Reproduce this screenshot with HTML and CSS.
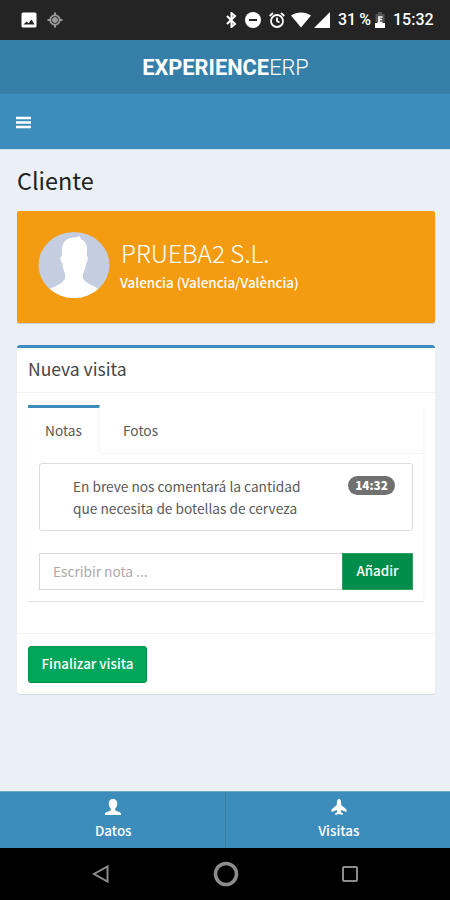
FILE: index.html
```html
<!DOCTYPE html>
<html lang="es">
<head>
    <meta charset="utf-8">
    <title>ExperienceERP</title>
    <link rel="stylesheet" href="styles.css">
</head>
<body>
    <div class="status-bar">
        <div class="status-left">
            <svg width="16" height="16" viewBox="0 0 16 16"><rect x="0.5" y="0.5" width="15" height="15" rx="1.5" fill="#fff"/><path d="M2.500 12.500l3-3 2 1.700 3-3.700 3 5z" fill="#242424"/></svg>
            <svg width="16" height="16" viewBox="0 0 16 16" fill="none" stroke="#999"><path d="M8 0.500v3M8 12.500v3M.5 8h3M12.500 8h3" stroke-width="2"/><circle cx="8" cy="8" r="4.700" stroke-width="2"/><circle cx="8" cy="8" r="2.500" fill="#999"/></svg>
        </div>
        <div class="status-right">
            <svg class="bluetooth" width="11" height="16" viewBox="0 0 11 16" fill="none" stroke="#fff" stroke-width="2"><path d="M1 4l8 8-3.500 3V1L9 4 1 12"/></svg>
            <svg class="dnd" width="16" height="16" viewBox="0 0 16 16"><circle cx="8" cy="8" r="8" fill="#fff"/><path d="M4 8h8" stroke="#242424" stroke-width="2"/></svg>
            <svg class="alarm" width="16" height="16" viewBox="0 0 16 16" fill="none" stroke="#fff" stroke-width="1.800"><circle cx="8" cy="9" r="6"/><path d="M8 5.500V9l2.500 1.500M.7 4L4 1M15.300 4L12 1"/></svg>
            <svg class="wifi" width="20" height="16" viewBox="0 0 20 16"><path d="M0 3.500C6-.5 14-.5 20 3.500L10 15.500z" fill="#fff"/></svg>
            <svg class="signal" width="16" height="16" viewBox="0 0 16 16"><path d="M16 0v16H0z" fill="#fff"/></svg>
            <span class="percent">31 %</span>
            <svg class="battery" width="10" height="16" viewBox="0 0 10 16"><path d="M3 0h4v2h2.500v8h-9V2H3z" fill="#555"/><path d="M0 11h10v5H0z" fill="#fff"/><path d="M7.500 5H4v5M4 7.500h3M2.500 10.500h5" stroke="#fff" stroke-width="1.600" fill="none"/></svg>
            <span class="clock">15:32</span>
        </div>
    </div>

    <header class="logo"><span><b>EXPERIENCE</b>ERP</span></header>
    <nav class="navbar">
        <svg width="15" height="13" viewBox="0 0 15 13" stroke="#fff" stroke-width="2.600"><path d="M0 2h15M0 6.500h15M0 11h15"/></svg>
    </nav>

    <main class="content">
        <h1>Cliente</h1>

        <div class="client">
            <svg class="avatar" width="72" height="66" viewBox="0 0 72 66">
                <clipPath id="round"><ellipse cx="36" cy="33" rx="35.500" ry="33"/></clipPath>
                <g clip-path="url(#round)">
                    <rect width="72" height="66" fill="#c5cde0"/>
                    <path d="M24 18C24 9 30 5.500 36 5.500c2.500 0 4-.6 5.500-2l1.500 3.500c4.500 2 6.500 6 6 12l-.3 5c1.600.3 1.500 5-.7 7.500C47.500 36 46.500 39 45 41.500v5C48 52 55 53 62 58v8H10v-8c7-4 14-5.500 17-11.500v-5c-1.500-2.500-2-6-2.500-10-2.500-2-2.500-7-.7-7.500z" fill="#fff"/>
                </g>
            </svg>
            <div class="client-info">
                <h2>PRUEBA2 S.L.</h2>
                <p>Valencia (Valencia/València)</p>
            </div>
        </div>

        <div class="box">
            <div class="box-header"><h3>Nueva visita</h3></div>
            <div class="box-body">
                <div class="tabs-custom">
                    <ul class="tabs">
                        <li class="active"><span>Notas</span></li>
                        <li><span>Fotos</span></li>
                    </ul>
                    <div class="tab-content">
                        <div class="note">
                            <p>En breve nos comentará la cantidad<br>que necesita de botellas de cerveza</p>
                            <span class="badge">14:32</span>
                        </div>
                        <div class="input-group">
                            <div class="input"><span>Escribir nota ...</span></div>
                            <button class="btn-add">Añadir</button>
                        </div>
                    </div>
                </div>
            </div>
            <div class="box-footer">
                <button class="btn-finish">Finalizar visita</button>
            </div>
        </div>
    </main>

    <nav class="bottom-nav">
        <div class="nav-item">
            <svg width="16" height="16" viewBox="0 0 16 16"><path d="M8 0c3 0 4.500 2 4.200 5-.2 2-1 3.500-2 4.500v1.700c1.500 1.300 4.800 1.300 5.800 3.300V16H0v-1.500c1-2 4.300-2 5.800-3.300V9.500c-1-1-1.800-2.500-2-4.500C3.500 2 5 0 8 0z" fill="#fff"/></svg>
            <span>Datos</span>
        </div>
        <div class="nav-item">
            <svg width="16" height="16" viewBox="0 0 16 16"><path d="M8 0c1.500 0 2.200 2 2.200 4v2l5.300 4.500V13l-5.300-2-.4 2 2 1.500V16L8.500 15 8 16l-.5-1-3.300 1v-1.500l2-1.500-.4-2L.5 13v-2.500L5.800 6V4c0-2 .7-4 2.200-4z" fill="#fff"/></svg>
            <span>Visitas</span>
        </div>
    </nav>

    <div class="android-nav">
        <svg width="18" height="18" viewBox="0 0 18 18" fill="none" stroke="#8c8c8c" stroke-width="2"><path d="M15.500 1.500v15L2 9z"/></svg>
        <svg width="26" height="26" viewBox="0 0 26 26" fill="none" stroke="#8c8c8c" stroke-width="3.600"><circle cx="13" cy="13" r="10.500"/></svg>
        <svg width="18" height="18" viewBox="0 0 18 18" fill="none" stroke="#8c8c8c" stroke-width="2"><rect x="2" y="2" width="14" height="14" rx="1"/></svg>
    </div>
</body>
</html>
```
FILE: styles.css
```css
* {
    box-sizing: border-box;
}

body {
    display: flex;
    flex-direction: column;
    width: 450px;
    height: 900px;
    margin: 0;
    overflow: hidden;
    font-family: "Noto Sans CJK SC", "Open Sans", sans-serif;
    font-size: 13.7px;
    color: #5a5a5a;
    background-color: #ebeff6;
}

h1, h2, h3, p, ul {
    margin: 0;
    padding: 0;
    font-weight: 400;
}

span {
    white-space: nowrap;
}

svg {
    display: block;
    flex: none;
}

.status-bar {
    display: flex;
    justify-content: space-between;
    height: 40px;
    padding: 0 17px 0 21px;
    background-color: #242424;
    color: #fff;
    font: 500 16px/42px Roboto, sans-serif;
}

.status-left, .status-right {
    display: flex;
    align-items: center;
}

.status-left {
    gap: 10px;
}

.dnd {
    margin-left: 8px;
}

.alarm {
    margin-left: 8px;
}

.wifi {
    margin-left: 6px;
}

.signal {
    margin-left: 3px;
}

.percent {
    width: 32px;
    margin-left: 8px;
    word-spacing: -1px;
}

.battery {
    margin-left: 5px;
}

.clock {
    width: 40px;
    margin-left: 8px;
}

.logo {
    height: 54px;
    padding-left: 1px;
    background-color: #367fa9;
    color: #fff;
    font: 300 21.8px/55px Roboto, sans-serif;
    text-align: center;
}

.logo b {
    font-weight: 700;
}

.navbar {
    display: flex;
    align-items: center;
    height: 56px;
    padding: 1px 0 0 16px;
    border-bottom: 1px solid #cfe5f6;
    background-color: #3c8dbc;
}

.content {
    flex: 1;
    padding: 11px 15px 0 17px;
}

h1 {
    height: 50px;
    font-size: 23.4px;
    line-height: 38px;
    color: #222;
}

.client {
    display: flex;
    height: 112px;
    padding: 21px 21px;
    border-radius: 2px;
    background-color: #f39c12;
    box-shadow: 0 1px 1px rgba(0, 0, 0, 0.15);
    color: #fff;
}

.client-info {
    margin-left: 11px;
}

h2 {
    height: 38px;
    font-size: 24.4px;
    font-weight: 300;
    line-height: 42px;
}

.client-info p {
    margin-left: -1px;
    font-size: 13.4px;
    font-weight: 500;
    line-height: 24px;
}

.box {
    height: 349px;
    margin-top: 22px;
    border-top: 3px solid #3c8dbc;
    border-radius: 3px;
    background-color: #fff;
    box-shadow: 0 1px 1px rgba(0, 0, 0, 0.1);
}

.box-header {
    height: 45px;
    padding-left: 11px;
    border-bottom: 1px solid #f2f2f2;
}

h3 {
    font-size: 17.5px;
    line-height: 41px;
    color: #444;
}

.box-body {
    height: 240px;
    padding: 12px 11px 0;
}

.tabs-custom {
    height: 196px;
    border-right: 1px solid #fafafa;
    box-shadow: 0 1px 1px rgba(0, 0, 0, 0.1);
}

.tabs {
    display: flex;
    height: 49px;
    border-bottom: 1px solid #f4f4f4;
    list-style: none;
    line-height: 45px;
}

.tabs li {
    height: 49px;
    padding-left: 23px;
    border-top: 3px solid transparent;
}

.tabs .active {
    width: 72px;
    padding-left: 17px;
    border-top-color: #3c8dbc;
    border-right: 1px solid #f4f4f4;
    background-color: #fff;
}

.tab-content {
    padding: 9px 10px 0 11px;
}

.note {
    display: flex;
    justify-content: space-between;
    height: 68px;
    padding: 11px 17px 0 33px;
    border: 1px solid #ddd;
    border-radius: 3px;
    line-height: 22px;
}

.badge {
    width: 47px;
    height: 19px;
    margin-top: 1px;
    border-radius: 10px;
    background-color: #707070;
    color: #fff;
    font-size: 11.7px;
    font-weight: 900;
    line-height: 18px;
    text-align: center;
}

.input-group {
    display: flex;
    height: 37px;
    margin-top: 22px;
}

.input {
    flex: 1;
    padding-left: 13px;
    border: 1px solid #d8d8d8;
    border-right: 0;
    color: #aaa;
    line-height: 35px;
}

button {
    padding: 0 0 2px;
    color: #fff;
    font-family: inherit;
    font-size: 13.4px;
    font-weight: 500;
    line-height: 33px;
}

.btn-add {
    width: 71px;
    border: 1px solid #32a05d;
    background-color: #008d4c;
}

.box-footer {
    padding: 12px 11px;
    border-top: 1px solid #f4f4f4;
}

.btn-finish {
    width: 119px;
    height: 37px;
    border: 1px solid #008d4c;
    border-radius: 3px;
    background-color: #00a65a;
}

.bottom-nav {
    display: flex;
    height: 57px;
    border-top: 1px solid #6fa6bd;
    background-color: #3c8dbc;
    color: #fff;
}

.nav-item {
    display: flex;
    flex: 1;
    flex-direction: column;
    align-items: center;
    padding: 7px 0 0 2px;
    font-size: 13.4px;
    font-weight: 500;
    line-height: 30px;
}

.nav-item:first-child {
    border-right: 1px solid #367fa9;
}

.android-nav {
    display: flex;
    align-items: center;
    justify-content: space-between;
    height: 52px;
    padding: 0 91px 0 92px;
    background-color: #000;
}
```
